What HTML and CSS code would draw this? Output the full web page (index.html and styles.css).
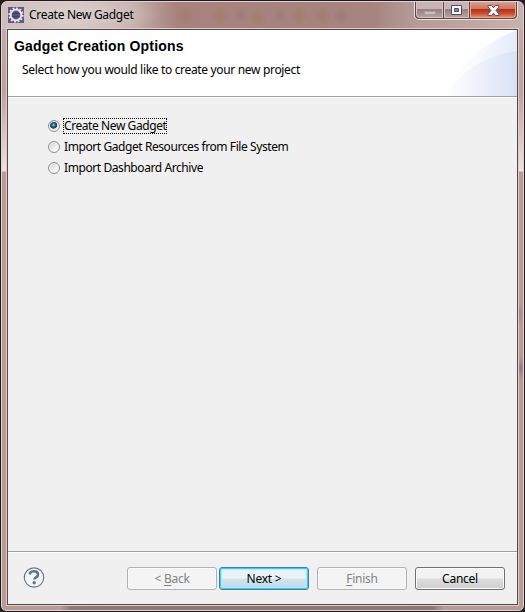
FILE: index.html
```html
<!DOCTYPE html>
<html lang="en">
<head>
<meta charset="utf-8">
<title>Create New Gadget</title>
<link rel="stylesheet" href="styles.css">
</head>
<body>
<div class="window">
  <div class="glass">
    <header class="titlebar">
      <svg class="app-icon" width="16" height="16" viewBox="0 0 16 16">
        <rect width="16" height="16" fill="#65568c"/>
        <circle cx="8" cy="8" r="6.700" fill="none" stroke="#eeeaf0" stroke-width="1.800" stroke-dasharray="1.8 1.7"/>
        <circle cx="8" cy="8" r="5.300" fill="#56517a" stroke="#eae6ea" stroke-width="1.800"/>
        <path d="M4.500 6.500h7M4.500 9.500h7" stroke="#3c3860" stroke-width=".8"/>
      </svg>
      <h1 class="caption">Create New Gadget</h1>
      <div class="controls">
        <span class="control minimize"><svg width="12" height="5"><rect x=".5" y=".5" width="11" height="3" fill="#c9c0c0" stroke="#a89b9c"/></svg></span>
        <span class="control maximize"><svg width="13" height="11"><path fill-rule="evenodd" d="M1.500 .5h10v9h-10zM4.500 3.500v3h4v-3z" fill="#fff" stroke="#514e62"/></svg></span>
        <span class="control close"><svg width="13" height="11" viewBox="0 0 13 11"><path d="M1 .5h3.500l2 2.400 2-2.400H12v1.500L9 5.500l3 3.500v1.500H8.500l-2-2.400-2 2.400H1V9l3-3.500L1 2z" fill="#fff" stroke="#5b5266"/></svg></span>
      </div>
    </header>
    <main class="client">
      <section class="banner">
        <h2>Gadget Creation Options</h2>
        <p>Select how you would like to create your new project</p>
        <svg class="swoosh" width="75" height="66" viewBox="0 0 75 66">
          <defs>
            <linearGradient id="outer"><stop offset="0" stop-color="#fff"/><stop offset=".4" stop-color="#f9fbfe"/><stop offset="1" stop-color="#eef2fc"/></linearGradient>
            <linearGradient id="middle"><stop offset="0" stop-color="#f5f8fe"/><stop offset="1" stop-color="#e5ebfa"/></linearGradient>
            <linearGradient id="inner"><stop offset="0" stop-color="#fff"/><stop offset=".4" stop-color="#f1f4fc"/><stop offset="1" stop-color="#d9e1f6"/></linearGradient>
          </defs>
          <path d="M2 66C16 38 39 11 75 1V66Z" fill="url(#outer)"/>
          <path d="M36 35C45 17 57 5 75 1V26Z" fill="url(#middle)"/>
          <path d="M2 66C17 44 42 25 75 21V66Z" fill="url(#inner)"/>
        </svg>
      </section>
      <section class="options">
        <label class="option"><span class="radio checked"></span><span class="text focused">Create New Gadget</span></label>
        <label class="option"><span class="radio"></span><span class="text">Import Gadget Resources from File System</span></label>
        <label class="option"><span class="radio"></span><span class="text">Import Dashboard Archive</span></label>
      </section>
      <footer class="actions">
        <svg class="help" width="22" height="22" viewBox="0 0 22 22">
          <circle cx="11" cy="10.500" r="9.700" fill="#f7f7f8" stroke="#657894" stroke-width="1.200"/>
          <path d="M7 7.500V6C8 4.600 9.300 4.200 11 4.200c2.400 0 4 1.200 4 3.200 0 3.200-3.600 2.800-3.600 5.200" fill="none" stroke="#61718f" stroke-width="2.600"/>
          <circle cx="11.200" cy="15.800" r="1.700" fill="#61718f"/>
        </svg>
        <span class="button disabled">&lt; <u>B</u>ack</span>
        <span class="button default">Next &gt;</span>
        <span class="button disabled finish"><u>F</u>inish</span>
        <span class="button cancel">Cancel</span>
      </footer>
    </main>
  </div>
</div>
</body>
</html>
```

FILE: styles.css
```css
* { box-sizing: border-box; }
body {
  margin: 0;
  background: #242022;
  font: 12px/16px "Noto Sans", "Open Sans", sans-serif;
  color: #000;
}
.window {
  width: 525px;
  height: 612px;
  padding: 1px;
  border-radius: 7px 7px 6px 6px;
  background: #201a1e;
}
.glass {
  height: 610px;
  padding: 0 5px 4px;
  border: 1px solid #e1d2d0;
  border-radius: 6px 6px 5px 5px;
  background:
    radial-gradient(ellipse 3px 12px at 519px 366px, #8b7581, transparent),
    radial-gradient(ellipse 3px 12px at 518px 312px, #9e898c, transparent),
    linear-gradient(90deg, transparent 58px, #8d7976 70px, #8b7875 430px, transparent 442px) 0 604px / 100% 4px no-repeat,
    linear-gradient(90deg, #cdbfbc 0, #cfc0bc 70px, #c3afab 130px, #a8827e 175px, #a6847f 370px, #b49a97 410px, #c7b2ae 520px) 0 0 / 100% 27px no-repeat,
    linear-gradient(#c5aeaa 0, #bca29e 90px, #eee1e0 168px, #f0e5e3 169px, #b79c97 170px, #b79b96 100%);
}
.titlebar {
  display: flex;
  height: 26px;
  padding-left: 1px;
  align-items: flex-start;
  background:
    radial-gradient(ellipse 85px 22px at 68px 13px, #dfd4d2b0 20%, #dfd4d200),
    radial-gradient(circle at 178px 14px, #9f796099, #9f796000 10px),
    radial-gradient(circle at 213px 14px, #9f796099, #9f796000 10px),
    radial-gradient(circle at 234px 13px, #92777699, #92777600 8px),
    radial-gradient(circle at 251px 16px, #9f796099, #9f796000 10px),
    radial-gradient(circle at 273px 13px, #92777699, #92777600 8px),
    radial-gradient(circle at 292px 14px, #9f796099, #9f796000 10px),
    radial-gradient(circle at 315px 14px, #9f796099, #9f796000 10px),
    radial-gradient(circle at 334px 14px, #92777699, #92777600 8px);
}
.app-icon { margin-top: 5px; }
.caption {
  margin: 5px 0 0 5px;
  font-size: 12px;
  font-weight: 400;
  letter-spacing: -.3px;
  white-space: nowrap;
}
.controls {
  display: flex;
  margin-left: auto;
  height: 18px;
  border: 1px solid #efe3e1;
  border-top: 0;
  border-radius: 0 0 5px 5px;
  background: #5c4547;
  padding: 0 1px 1px;
  gap: 1px;
}
.control {
  display: flex;
  width: 27px;
  align-items: center;
  justify-content: center;
  border: 1px solid #d5c4c3;
  border-top: 0;
  background: linear-gradient(#c7b5b3 0 45%, #987f80 50%, #b6a19f);
}
.minimize { border-radius: 0 0 0 4px; }
.minimize svg { margin-top: 7px; }
.maximize { width: 25px; }
.close {
  width: 46px;
  border-color: #e7a997;
  border-radius: 0 0 4px;
  background: linear-gradient(#d9a08f 0, #cb7662 45%, #b82f19 50%, #cb4a2d 75%, #df8867);
}
.close svg, .maximize svg { margin-top: 1px; }
.client {
  display: flex;
  flex-direction: column;
  height: 576px;
  border: 1px solid #594744;
  outline: 1px solid #dfcfcc;
  background: #f0f0f0;
  margin-top: 1px;
}
.banner {
  position: relative;
  height: 67px;
  padding: 8px 6px;
  background: #fff;
  border-bottom: 1px solid #a0a0a0;
  box-shadow: 0 1px #fff;
}
.banner h2 {
  margin: 0;
  font: 700 14px/17px "Liberation Sans", sans-serif;
  letter-spacing: .17px;
}
.banner p { margin: 7px 0 0 8px; letter-spacing: -.33px; white-space: nowrap; }
.swoosh { position: absolute; right: 0; bottom: 0; }
.options {
  display: flex;
  flex: 1;
  flex-direction: column;
  gap: 5px;
  padding: 21px 40px;
  letter-spacing: -.42px;
}
.option { display: flex; height: 16px; align-items: center; white-space: nowrap; }
.radio {
  width: 12px;
  height: 12px;
  margin-right: 3px;
  border: 1px solid #8e8f8f;
  border-radius: 50%;
  background: linear-gradient(135deg, #c8ccd0, #fafafa 75%);
  box-shadow: inset 0 0 0 1px #f4f4f4;
}
.checked { background: radial-gradient(circle at 45% 40%, #81d7f5 0, #27779f 1.500px, #153451 3.300px, #e4e7eb 4px); }
.text { padding: 0 1px; line-height: 16px; }
.focused { width: 104px; outline: 1px dotted #000; outline-offset: -1px; }
.actions {
  display: flex;
  height: 53px;
  padding: 15px 12px 0 15px;
  border-top: 1px solid #a0a0a0;
  box-shadow: inset 0 1px #fff;
}
.help { margin-right: 82px; }
.button {
  width: 90px;
  height: 23px;
  margin-right: 2px;
  border: 1px solid #707070;
  border-radius: 3px;
  box-shadow: inset 0 0 0 1px #fbfbfb;
  background: linear-gradient(#f2f2f2 0 48%, #dddddd 52%, #cfcfcf);
  text-align: center;
  line-height: 22px;
  letter-spacing: -.25px;
}
.disabled { color: #838383; border-color: #adb2b5; background: #f4f4f4; }
.default {
  border-color: #3c7fb1;
  box-shadow: inset 0 0 0 1px #35cdf5, inset 0 0 1px 2px #b3e9f8;
  background: linear-gradient(#eaf3f8 0 48%, #d2e4ed 52%, #bed9e6);
  margin-right: 8px;
}
.finish { margin-right: 8px; }
.cancel { margin-right: 0; }
u { text-underline-offset: 2px; }
```
